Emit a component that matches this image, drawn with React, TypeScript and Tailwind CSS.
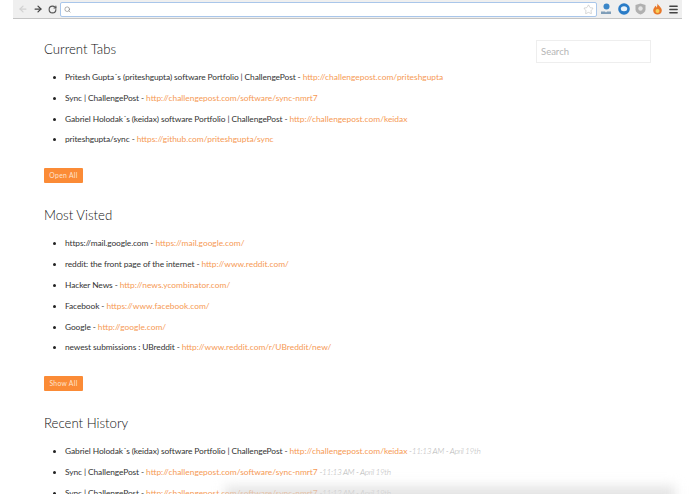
import { ArrowLeft, ArrowRight, RotateCw, Search, Star, Menu } from 'lucide-react';

const link = 'tracking-normal text-[#f69a55]';

type Row = { title: string; url: string; time?: string };

const tabs: Row[] = [
  { title: 'Pritesh Gupta´s (priteshgupta) software Portfolio | ChallengePost', url: 'http://challengepost.com/priteshgupta' },
  { title: 'Sync | ChallengePost', url: 'http://challengepost.com/software/sync-nmrt7' },
  { title: 'Gabriel Holodak´s (keidax) software Portfolio | ChallengePost', url: 'http://challengepost.com/keidax' },
  { title: 'priteshgupta/sync', url: 'https://github.com/priteshgupta/sync' },
];

const visited: Row[] = [
  { title: 'https://mail.google.com', url: 'https://mail.google.com/' },
  { title: 'reddit: the front page of the internet', url: 'http://www.reddit.com/' },
  { title: 'Hacker News', url: 'http://news.ycombinator.com/' },
  { title: 'Facebook', url: 'https://www.facebook.com/' },
  { title: 'Google', url: 'http://google.com/' },
  { title: 'newest submissions : UBreddit', url: 'http://www.reddit.com/r/UBreddit/new/' },
];

const history: Row[] = [
  { title: 'Gabriel Holodak´s (keidax) software Portfolio | ChallengePost', url: 'http://challengepost.com/keidax', time: '11:13 AM - April 19th' },
  { title: 'Sync | ChallengePost', url: 'http://challengepost.com/software/sync-nmrt7', time: '11:13 AM - April 19th' },
  { title: 'Sync | ChallengePost', url: 'http://challengepost.com/software/sync-nmrt7', time: '11:12 AM - April 19th' },
];

function LinkList({ rows }: { rows: Row[] }) {
  return (
    <ul className="mt-[14px] flex flex-col gap-[9.8px] pl-[21px] list-disc text-[8.4px] leading-[11px] tracking-[-0.1px] text-[#333] marker:text-[#222]">
      {rows.map((r, i) => (
        <li key={i}>
          {r.title} - <a className={link}>{r.url}</a>
          {r.time && <i className="font-light tracking-[-0.4px] text-[#b5b5b5]"> -{r.time}</i>}
        </li>
      ))}
    </ul>
  );
}

function OrangeButton({ label }: { label: string }) {
  return (
    <button className="mt-[23px] h-[15px] w-[39px] rounded-[1px] bg-[#fb8b36] text-[6.8px] leading-[15px] tracking-[0.3px] text-[#ffe3cd]">
      {label}
    </button>
  );
}

function Toolbar() {
  return (
    <div className="mx-[13px] flex h-[19px] w-[669px] items-center border-b border-[#c4c4c4] bg-[#efefef]">
      <div className="flex w-[47px] items-center gap-[5px] pl-[5px]">
        <ArrowLeft size={10} strokeWidth={3} className="text-[#d2d2d2]" />
        <ArrowRight size={10} strokeWidth={3} className="text-[#444]" />
        <RotateCw size={9} strokeWidth={3} className="text-[#555]" />
      </div>
      <div className="flex h-[15px] w-[537px] items-center justify-between rounded-[2px] border border-[#a9c6ea] bg-white px-[3px]">
        <Search size={7} className="text-[#777]" />
        <Star size={11} strokeWidth={1} className="mr-[-1px] text-[#aaa]" />
      </div>
      <div className="ml-[3px] flex items-center gap-[5.500px]">
        <svg width="12" height="12" viewBox="0 0 12 12">
          <circle cx="6.500" cy="3.500" r="3" fill="#3a86c8" />
          <path d="M1 8.500h4l1 1 1-1h4V11H1z" fill="#7f9db8" />
        </svg>
        <svg width="12" height="12" viewBox="0 0 12 12">
          <circle cx="6" cy="6" r="5.800" fill="#2a7cc7" />
          <ellipse cx="6" cy="5.700" rx="3.200" ry="2.500" fill="#e8f2fa" />
        </svg>
        <svg width="11" height="12" viewBox="0 0 11 12">
          <path d="M5.500 .5 10.500 2v4.500c0 2.500-2.200 4-5 5-2.800-1-5-2.500-5-5V2z" fill="#b0b0b0" />
          <circle cx="5.500" cy="5.500" r="2.200" fill="#e4e4e4" />
        </svg>
        <svg width="11" height="12" viewBox="0 0 11 12">
          <path d="M5.500 .5c.6 2 4.300 3.800 4.300 6.900 0 2.400-2 4.100-4.300 4.100s-4.300-1.700-4.300-4.100c0-2.200 1.600-3 2-4.700.9.500 1.300 1.100 1.400 2C5.200 3.500 5.500 2.200 5.500 .5z" fill="#e8782a" />
          <circle cx="5.500" cy="8" r="2" fill="#f8d05a" />
        </svg>
        <Menu size={11} strokeWidth={3} className="text-[#444]" />
      </div>
    </div>
  );
}

export default function App() {
  return (
    <div className="relative h-[494px] w-[695px] overflow-hidden bg-white font-['Lato',sans-serif]">
      <Toolbar />
      <div className="flex items-start justify-between pl-[44px] pr-[44px]">
        <main className="min-w-0 flex-1 pt-[21px]">
          <h2 className="text-[13.200px] leading-[18px] font-light text-[#111]">Current Tabs</h2>
          <LinkList rows={tabs} />
          <OrangeButton label="Open All" />
          <h2 className="mt-[22px] text-[13.200px] leading-[18px] font-light text-[#111]">Most Visted</h2>
          <LinkList rows={visited} />
          <OrangeButton label="Show All" />
          <h2 className="mt-[22px] text-[13.200px] leading-[18px] font-light text-[#111]">Recent History</h2>
          <LinkList rows={history} />
        </main>
        <input
          placeholder="Search"
          className="mt-[21px] h-[23px] w-[115px] border border-[#eeeeee] px-[4px] text-[9.500px] placeholder:text-[#b5b5b5]"
        />
      </div>
      {/* blurred shadow over the bottom of the page */}
      <div className="absolute bottom-[-12px] left-[225px] h-[20px] w-[450px] bg-[#d8d8d8]/70 blur-[6px]" />
    </div>
  );
}
